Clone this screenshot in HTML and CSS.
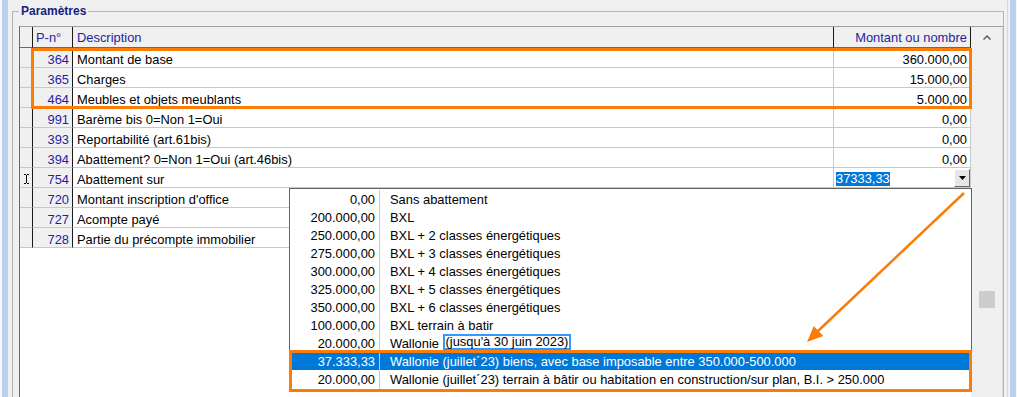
FILE: index.html
```html
<!DOCTYPE html>
<html lang="fr">
<head>
    <meta charset="UTF-8">
    <title>Paramètres</title>
    <link rel="stylesheet" href="styles.css">
</head>
<body>
<div class="window">
    <div class="frame-left"></div>
    <div class="client">
        <div class="group">
            <div class="group-title">Paramètres</div>
            <div class="grid">
                <div class="grid-data">
                    <div class="row head">
                        <div class="c-ind"></div>
                        <div class="c-num">P-n°</div>
                        <div class="c-desc">Description</div>
                        <div class="c-val">Montant ou nombre</div>
                    </div>
                    <div class="row">
                        <div class="c-ind"></div>
                        <div class="c-num">364</div>
                        <div class="c-desc">Montant de base</div>
                        <div class="c-val">360.000,00</div>
                    </div>
                    <div class="row">
                        <div class="c-ind"></div>
                        <div class="c-num">365</div>
                        <div class="c-desc">Charges</div>
                        <div class="c-val">15.000,00</div>
                    </div>
                    <div class="row">
                        <div class="c-ind"></div>
                        <div class="c-num">464</div>
                        <div class="c-desc">Meubles et objets meublants</div>
                        <div class="c-val">5.000,00</div>
                    </div>
                    <div class="row">
                        <div class="c-ind"></div>
                        <div class="c-num">991</div>
                        <div class="c-desc">Barème bis 0=Non 1=Oui</div>
                        <div class="c-val">0,00</div>
                    </div>
                    <div class="row">
                        <div class="c-ind"></div>
                        <div class="c-num">393</div>
                        <div class="c-desc">Reportabilité (art.61bis)</div>
                        <div class="c-val">0,00</div>
                    </div>
                    <div class="row">
                        <div class="c-ind"></div>
                        <div class="c-num">394</div>
                        <div class="c-desc">Abattement? 0=Non 1=Oui (art.46bis)</div>
                        <div class="c-val">0,00</div>
                    </div>
                    <div class="row">
                        <div class="c-ind">
                            <svg width="7" height="10" viewBox="0 0 7 10"><path d="M1 0.5H3M4 0.5H6M3.5 1V9M1 9.5H3M4 9.5H6" stroke="#000" fill="none"/></svg>
                        </div>
                        <div class="c-num">754</div>
                        <div class="c-desc">Abattement sur</div>
                        <div class="c-val edit">
                            <span class="sel">37333,33</span>
                            <span class="drop-btn">
                                <svg width="7" height="4" viewBox="0 0 7 4"><polygon points="0,0 7,0 3.5,4" fill="#000"/></svg>
                            </span>
                        </div>
                    </div>
                    <div class="row">
                        <div class="c-ind"></div>
                        <div class="c-num">720</div>
                        <div class="c-desc">Montant inscription d'office</div>
                        <div class="c-val">0,00</div>
                    </div>
                    <div class="row">
                        <div class="c-ind"></div>
                        <div class="c-num">727</div>
                        <div class="c-desc">Acompte payé</div>
                        <div class="c-val">0,00</div>
                    </div>
                    <div class="row">
                        <div class="c-ind"></div>
                        <div class="c-num">728</div>
                        <div class="c-desc">Partie du précompte immobilier</div>
                        <div class="c-val">0,00</div>
                    </div>
                </div>
                <div class="vscroll">
                    <div class="sb-up">
                        <svg width="8" height="5" viewBox="0 0 8 5"><polyline points="0.5,4.5 4,1 7.5,4.5" fill="none" stroke="#606060" stroke-width="1.5"/></svg>
                    </div>
                    <div class="sb-thumb"></div>
                </div>
            </div>
        </div>
    </div>
    <div class="frame-right"></div>

    <!-- liste déroulante ouverte -->
    <div class="combo-list">
        <div class="opt"><span class="opt-val">0,00</span><span class="opt-text">Sans abattement</span></div>
        <div class="opt"><span class="opt-val">200.000,00</span><span class="opt-text">BXL</span></div>
        <div class="opt"><span class="opt-val">250.000,00</span><span class="opt-text">BXL + 2 classes énergétiques</span></div>
        <div class="opt"><span class="opt-val">275.000,00</span><span class="opt-text">BXL + 3 classes énergétiques</span></div>
        <div class="opt"><span class="opt-val">300.000,00</span><span class="opt-text">BXL + 4 classes énergétiques</span></div>
        <div class="opt"><span class="opt-val">325.000,00</span><span class="opt-text">BXL + 5 classes énergétiques</span></div>
        <div class="opt"><span class="opt-val">350.000,00</span><span class="opt-text">BXL + 6 classes énergétiques</span></div>
        <div class="opt"><span class="opt-val">100.000,00</span><span class="opt-text">BXL terrain à batir</span></div>
        <div class="opt"><span class="opt-val">20.000,00</span><span class="opt-text">Wallonie <span class="hint">(jusqu'à 30 juin 2023)</span></span></div>
        <div class="opt active"><span class="opt-val">37.333,33</span><span class="opt-text">Wallonie (juillet´23) biens, avec base imposable entre 350.000-500.000</span></div>
        <div class="opt"><span class="opt-val">20.000,00</span><span class="opt-text">Wallonie (juillet´23) terrain à bâtir ou habitation en construction/sur plan, B.I. &gt; 250.000</span></div>
    </div>

    <!-- annotations -->
    <div class="mark mark-top"></div>
    <div class="mark mark-bottom"></div>
    <svg class="arrow" width="1017" height="397" viewBox="0 0 1017 397">
        <line x1="964" y1="193" x2="818" y2="331" stroke="#fb7d08" stroke-width="2.5"/>
        <polygon points="807,342 813.8,325.9 823.4,336.1" fill="#fb7d08"/>
    </svg>
</div>
</body>
</html>
```

FILE: styles.css
```css
* {
    box-sizing: border-box;
}
body {
    margin: 0;
    background: #f0f0f0;
    font-family: "Liberation Sans", Arial, sans-serif;
    font-size: 12.9px;
    color: #000;
    overflow: hidden;
}
.window {
    position: relative;
    display: flex;
    width: 1017px;
    height: 397px;
    overflow: hidden;
}
.frame-left {
    width: 8px;
    border-left: 2px solid #f7f7f7;
    background: #b9d1ea;
}
.client {
    flex: 1;
}
.frame-right {
    width: 10px;
    border-left: 1px solid #d9d9d9;
    border-right: 1px solid #f7f7f7;
    background: linear-gradient(to right, #f0f0f0 2px, #b9d1ea 2px);
}
/* Group box */
.group {
    position: relative;
    margin: 11px 3px 0 4px;
    padding: 14px 0 0 6px;
    border: 1px solid #b5b5b5;
    border-bottom: none;
    height: 400px;
}
.group-title {
    position: absolute;
    top: -8px;
    left: 6px;
    padding: 0 2px;
    background: #f0f0f0;
    font-size: 12px;
    font-weight: bold;
    line-height: 15px;
    color: #13247e;
}
/* Grid */
.grid {
    display: flex;
    height: 380px;
    border-top: 1px solid #a0a0a0;
    border-left: 1px solid #696969;
}
.grid-data {
    width: 951px;
    background: #fff;
}
.row {
    display: grid;
    grid-template-columns: 13px 40px 761px 137px;
    height: 20px;
    line-height: 19px;
}
.row > div {
    padding-top: 2px;
    border-right: 1px solid #c8c8c8;
    border-bottom: 1px solid #c8c8c8;
    white-space: nowrap;
    overflow: hidden;
}
.row > .c-ind, .row > .c-num {
    background: #f0f0f0;
    border-right-color: #1a1a1a;
}
.c-ind {
    display: flex;
    align-items: center;
    justify-content: center;
}
.c-num {
    text-align: right;
    padding-right: 3px;
    color: #1f1fa0;
}
.c-desc {
    padding-left: 4px;
}
.c-val {
    text-align: right;
    padding-right: 3px;
}
.head {
    height: 21px;
    line-height: 20px;
}
.head > div {
    padding-top: 1px;
    background: #f0f0f0;
    border-right-color: #1a1a1a;
    border-bottom-color: #696969;
    color: #1f1fa0;
}
.head .c-num {
    text-align: left;
    padding-left: 3px;
}
.c-val.edit {
    display: flex;
    align-items: flex-start;
    padding: 0 0 0 2px;
    text-align: left;
}
.sel {
    margin-top: 4px;
    background: #0078d7;
    color: #fff;
    line-height: 14px;
}
.drop-btn {
    margin: 1px 0 0 auto;
    width: 16px;
    height: 18px;
    display: flex;
    align-items: center;
    justify-content: center;
    background: #e6e6e6;
    border: 1px solid;
    border-color: #fff #696969 #696969 #fff;
}
/* Scrollbar */
.vscroll {
    flex: 1;
    background: #f0f0f0;
    padding-left: 8px;
    border-right: 1px solid #dadada;
}
.sb-up svg {
    display: block;
    margin: 8px 0 0 4px;
}
.sb-thumb {
    width: 16px;
    height: 17px;
    margin-top: 251px;
    background: #cdcdcd;
}
/* Combo dropdown list */
.combo-list {
    position: absolute;
    left: 289px;
    top: 188px;
    width: 683px;
    height: 202px;
    padding-top: 1px;
    background: #fff;
    border: 1px solid #646464;
}
.opt {
    display: grid;
    grid-template-columns: 90px 1fr;
    height: 18px;
    line-height: 19px;
    white-space: nowrap;
}
.opt-val {
    text-align: right;
    padding-right: 4px;
    border-right: 1px solid #c8c8c8;
}
.opt-text {
    padding-left: 10px;
}
.opt.active {
    background: #0078d7;
    color: #fff;
}
.hint {
    display: inline-block;
    vertical-align: top;
    line-height: 12px;
    padding: 0 1px;
    border: 2px solid #3399ff;
}
/* Annotations */
.mark {
    position: absolute;
    border: 3px solid #fb7d08;
}
.mark-top {
    left: 31px;
    top: 48px;
    width: 941px;
    height: 61px;
}
.mark-bottom {
    left: 289px;
    top: 350px;
    width: 683px;
    height: 42px;
}
.arrow {
    position: absolute;
    left: 0;
    top: 0;
    pointer-events: none;
}
```
